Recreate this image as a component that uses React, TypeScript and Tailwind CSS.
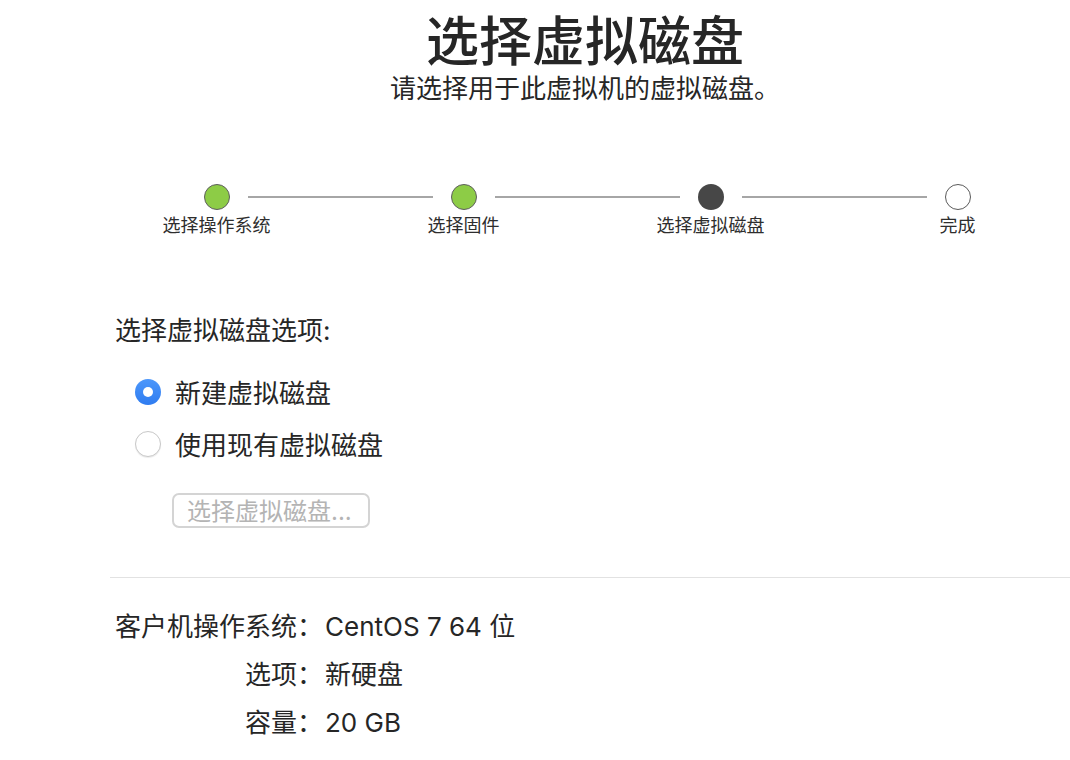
const steps = [
  { label: "选择操作系统", state: "done" },
  { label: "选择固件", state: "done" },
  { label: "选择虚拟磁盘", state: "current" },
  { label: "完成", state: "todo" },
];

const summary = [
  { label: "客户机操作系统：", value: "CentOS 7 64 位" },
  { label: "选项：", value: "新硬盘" },
  { label: "容量：", value: "20 GB" },
];

const StepDot = ({ state }: { state: string }) => {
  if (state === "done")
    return <div className="h-[26px] w-[26px] shrink-0 rounded-full border border-[#5e5e5e] bg-[#8dcc46]" />;
  if (state === "current")
    return <div className="h-[26px] w-[26px] shrink-0 rounded-full bg-[#474747]" />;
  return <div className="h-[26px] w-[26px] shrink-0 rounded-full border border-[#5a5a5a] bg-white" />;
};

const Radio = ({ checked }: { checked: boolean }) =>
  checked ? (
    <div className="flex h-[26px] w-[26px] items-center justify-center rounded-full bg-gradient-to-b from-[#4c97fb] to-[#2f7cf0]">
      <div className="h-[10px] w-[10px] rounded-full bg-white" />
    </div>
  ) : (
    <div className="h-[26px] w-[26px] rounded-full border border-[#c8c8c8] bg-white shadow-[0_1px_1px_rgba(0,0,0,0.08)]" />
  );

export default function App() {
  return (
    <div
      className="h-[760px] w-[1070px] overflow-hidden bg-white text-[#262626]"
      style={{ fontFamily: 'Inter, "Noto Sans CJK SC", sans-serif' }}
    >
      <div className="ml-[100px] w-[970px]">
        {/* header */}
        <div className="flex flex-col items-center pt-[16px]">
          <h1 className="text-[53px] leading-[52px] font-medium">选择虚拟磁盘</h1>
          <p className="mt-[8px] text-[26px] leading-[26px]">请选择用于此虚拟机的虚拟磁盘。</p>
        </div>
      </div>

      {/* stepper */}
      <div className="ml-[93px] mt-[82px] grid w-[988px] grid-cols-4">
        {steps.map((step, i) => (
          <div key={step.label} className="flex flex-col items-center">
            <div className="flex w-full items-center">
              <div className="flex-1">
                {i > 0 && <div className="mr-[18px] h-[2px] bg-[#a6a6a6]" />}
              </div>
              <StepDot state={step.state} />
              <div className="flex-1">
                {i < steps.length - 1 && <div className="ml-[18px] h-[2px] bg-[#a6a6a6]" />}
              </div>
            </div>
            <span className="mt-[7px] text-[18px] leading-[18px] text-[#2e2e2e]">{step.label}</span>
          </div>
        ))}
      </div>

      <div className="ml-[100px] w-[970px]">
        {/* options */}
        <div className="pl-[15px]">
          <h2 className="mt-[83px] text-[26px] leading-[26px]">选择虚拟磁盘选项:</h2>
          <div className="mt-[33px] flex flex-col gap-[22px] pl-[20px]">
            <label className="flex items-center gap-[14px]">
              <Radio checked />
              <span className="pt-[4px] text-[26px] leading-[26px]">新建虚拟磁盘</span>
            </label>
            <label className="flex items-center gap-[14px]">
              <Radio checked={false} />
              <span className="pt-[4px] text-[26px] leading-[26px]">使用现有虚拟磁盘</span>
            </label>
          </div>
          <button className="ml-[57px] mt-[34px] flex h-[35px] w-[198px] items-center rounded-[7px] border-2 border-[#d4d4d4] pl-[13px] pt-[2px] text-[24px] leading-[24px] text-[#b4b4b4]">
            选择虚拟磁盘...
          </button>
        </div>

        <div className="ml-[10px] mt-[49px] h-px bg-[#e2e2e2]" />

        {/* summary */}
        <div className="mt-[36px] grid grid-cols-[auto_1fr] gap-y-[22px] pl-[15px] text-[26px] leading-[26px]">
          {summary.map((row) => (
            <div key={row.label} className="contents">
              <span className="text-right">{row.label}</span>
              <span className="pl-[2px]">{row.value}</span>
            </div>
          ))}
        </div>
      </div>
    </div>
  );
}
